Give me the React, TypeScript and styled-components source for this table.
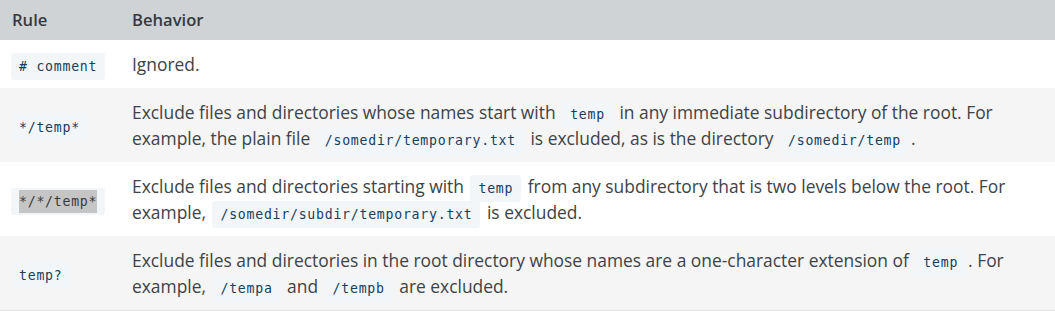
import styled, { createGlobalStyle } from "styled-components";

const GlobalStyle = createGlobalStyle`
  html, body {
    margin: 0;
    padding: 0;
    background: #ffffff;
  }
`;

const Table = styled.table`
  width: 1055px;
  border-collapse: collapse;
  font-family: "Open Sans", "Noto Sans", sans-serif;
  font-size: 17.4px;
  line-height: 26px;
  color: #3d4348;
`;

const HeadCell = styled.th<{ $rule?: boolean }>`
  background: #d0d3d6;
  color: #363a3e;
  font-size: 16.6px;
  font-weight: 600;
  text-align: left;
  height: 40px;
  padding: 0 12px;
  width: ${(p) => (p.$rule ? "96px" : "auto")};
`;

const BodyRow = styled.tr`
  &:nth-child(even) {
    background: #f5f5f5;
  }

  &:last-child {
    border-bottom: 1px solid #e6e6e6;
  }
`;

const RuleCell = styled.td`
  padding: 11px 12px 11px 9px;
  vertical-align: middle;
  white-space: nowrap;
`;

const BehaviorCell = styled.td`
  padding: 11px 12px;
  vertical-align: middle;
`;

const Code = styled.code`
  font-family: "DejaVu Sans Mono", "Liberation Mono", monospace;
  font-size: 13.2px;
  line-height: 1;
  letter-spacing: 0.75px;
  color: #17405f;
  background: #f2f6f9;
  border-radius: 3px;
  padding: 6px 8px;
  margin: 0 2px;
`;

const Selected = styled.span`
  background: #c5c5c5;
  color: #3b3b3b;
  padding: 4px 0;
`;

interface RuleRow {
  rule: string;
  selected?: boolean;
  behavior: React.ReactNode;
}

const rows: RuleRow[] = [
  {
    rule: "# comment",
    behavior: <>Ignored.</>,
  },
  {
    rule: "*/temp*",
    behavior: (
      <>
        Exclude files and directories whose names start with <Code>temp</Code> in any immediate
        subdirectory of the root. For example, the plain file <Code>/somedir/temporary.txt</Code> is
        excluded, as is the directory <Code>/somedir/temp</Code>.
      </>
    ),
  },
  {
    rule: "*/*/temp*",
    selected: true,
    behavior: (
      <>
        Exclude files and directories starting with <Code>temp</Code> from any subdirectory that is two
        levels below the root. For example, <Code>/somedir/subdir/temporary.txt</Code> is excluded.
      </>
    ),
  },
  {
    rule: "temp?",
    behavior: (
      <>
        Exclude files and directories in the root directory whose names are a one-character extension
        of <Code>temp</Code>. For example, <Code>/tempa</Code> and <Code>/tempb</Code> are excluded.
      </>
    ),
  },
];

export default function App() {
  return (
    <>
      <GlobalStyle />
      <Table>
        <thead>
          <tr>
            <HeadCell $rule>Rule</HeadCell>
            <HeadCell>Behavior</HeadCell>
          </tr>
        </thead>
        <tbody>
          {rows.map((row) => (
            <BodyRow key={row.rule}>
              <RuleCell>
                <Code>{row.selected ? <Selected>{row.rule}</Selected> : row.rule}</Code>
              </RuleCell>
              <BehaviorCell>{row.behavior}</BehaviorCell>
            </BodyRow>
          ))}
        </tbody>
      </Table>
    </>
  );
}
